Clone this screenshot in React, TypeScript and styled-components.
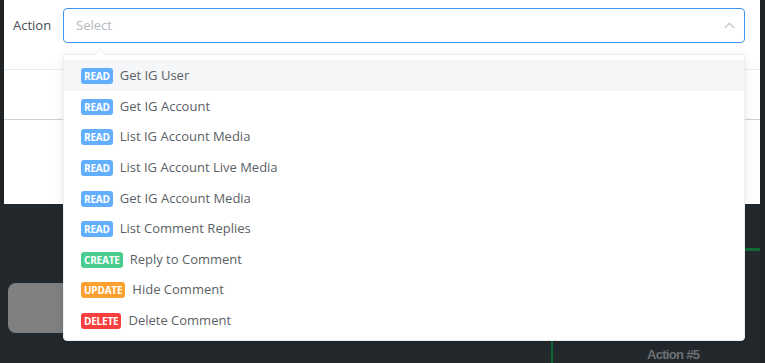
import React from "react";
import styled, { createGlobalStyle } from "styled-components";

const Global = createGlobalStyle`
  html, body { margin: 0; padding: 0; background: #23282c; }
  * { box-sizing: border-box; }
`;

const Page = styled.div`
  position: relative;
  width: 765px;
  height: 363px;
  overflow: hidden;
  background: #23282c;
  font-family: "Open Sans", "Liberation Sans", sans-serif;
`;

const Panel = styled.div`
  margin-left: 4px;
  width: 756px;
  height: 204px;
  background: #ffffff;
  display: flex;
  flex-direction: column;
`;

const FieldRow = styled.div`
  display: flex;
  align-items: center;
  padding: 8px 15px 26px 9px;
`;

const Label = styled.label`
  width: 50px;
  flex: none;
  font-size: 13px;
  color: #4a4d52;
  margin-top: -1px;
`;

const SelectBox = styled.div`
  flex: 1;
  height: 35px;
  display: flex;
  align-items: center;
  justify-content: space-between;
  padding: 0 9px 0 12px;
  border: 1px solid #3a97f8;
  border-radius: 4px;
  background: #fff;
`;

const Placeholder = styled.span`
  font-size: 13px;
  color: #b3b7bd;
  margin-top: -1px;
`;

const Divider = styled.div<{ $tone: "light" | "dark" }>`
  height: 1px;
  flex: none;
  background: ${(p) => (p.$tone === "light" ? "#e9ebee" : "#cdd0d5")};
`;

const Spacer = styled.div<{ $h: number }>`
  height: ${(p) => p.$h}px;
  flex: none;
`;

const Dropdown = styled.ul`
  position: absolute;
  left: 63px;
  top: 54px;
  width: 682px;
  margin: 0;
  padding: 5px 0 5px;
  list-style: none;
  background: #fff;
  border: 1px solid #eceef2;
  border-radius: 4px;
  box-shadow: 0 2px 10px rgba(0, 0, 0, 0.1);
  &::before {
    content: "";
    position: absolute;
    left: 30px;
    top: -6px;
    border: 6px solid transparent;
    border-top: 0;
    border-bottom-color: #eceef2;
  }
  &::after {
    content: "";
    position: absolute;
    left: 31px;
    top: -5px;
    border: 5px solid transparent;
    border-top: 0;
    border-bottom-color: #fff;
  }
`;

const Item = styled.li<{ $active?: boolean }>`
  height: 30.6px;
  display: flex;
  align-items: center;
  gap: 7px;
  padding-left: 17px;
  background: ${(p) => (p.$active ? "#f5f6f8" : "transparent")};
  font-size: 13px;
  color: #5b5f66;
`;

const badgeColors: Record<string, string> = {
  READ: "#61affe",
  CREATE: "#49cc90",
  UPDATE: "#fca130",
  DELETE: "#f93e3e",
};

const Badge = styled.span<{ $kind: string }>`
  height: 16px;
  padding: 0 3px;
  border-radius: 3px;
  display: inline-flex;
  align-items: center;
  font-size: 10px;
  font-weight: 700;
  letter-spacing: -0.2px;
  color: #fff;
  margin-top: 2px;
  background: ${(p) => badgeColors[p.$kind]};
`;

const Block = styled.div`
  position: absolute;
  left: 8px;
  top: 283px;
  width: 140px;
  height: 50px;
  border-radius: 8px;
  background: #808080;
`;

const Wire = styled.div<{ $vertical?: boolean }>`
  position: absolute;
  background: #0b6b31;
  ${(p) =>
    p.$vertical
      ? "left: 551px; top: 341px; width: 2px; height: 30px;"
      : "left: 700px; top: 248px; width: 60px; height: 3px;"}
`;

const NodeLabel = styled.div`
  position: absolute;
  left: 647px;
  top: 347px;
  font-family: "Liberation Sans", Arial, sans-serif;
  font-weight: 700;
  font-size: 13px;
  letter-spacing: -0.7px;
  color: #6c7075;
`;

const RightEdge = styled.div`
  position: absolute;
  left: 760px;
  top: 0;
  width: 5px;
  height: 363px;
  background: #202428;
`;

const LeftEdge = styled.div`
  position: absolute;
  left: 0;
  top: 0;
  width: 4px;
  height: 204px;
  background: #1f2326;
`;

const items: [string, string][] = [
  ["READ", "Get IG User"],
  ["READ", "Get IG Account"],
  ["READ", "List IG Account Media"],
  ["READ", "List IG Account Live Media"],
  ["READ", "Get IG Account Media"],
  ["READ", "List Comment Replies"],
  ["CREATE", "Reply to Comment"],
  ["UPDATE", "Hide Comment"],
  ["DELETE", "Delete Comment"],
];

export default function App() {
  return (
    <>
      <Global />
      <Page>
        <Panel>
          <FieldRow>
            <Label>Action</Label>
            <SelectBox>
              <Placeholder>Select</Placeholder>
              <svg width="11" height="7" viewBox="0 0 11 7">
                <polyline
                  points="0.8,6 5.5,1.3 10.2,6"
                  fill="none"
                  stroke="#c0c4cc"
                  strokeWidth="1.3"
                />
              </svg>
            </SelectBox>
          </FieldRow>
          <Divider $tone="light" />
          <Spacer $h={49} />
          <Divider $tone="dark" />
        </Panel>
        <LeftEdge />
        <RightEdge />
        <Block />
        <Wire />
        <Wire $vertical />
        <NodeLabel>Action #5</NodeLabel>
        <Dropdown>
          {items.map(([kind, text], i) => (
            <Item key={i} $active={i === 0}>
              <Badge $kind={kind}>{kind}</Badge>
              {text}
            </Item>
          ))}
        </Dropdown>
      </Page>
    </>
  );
}
